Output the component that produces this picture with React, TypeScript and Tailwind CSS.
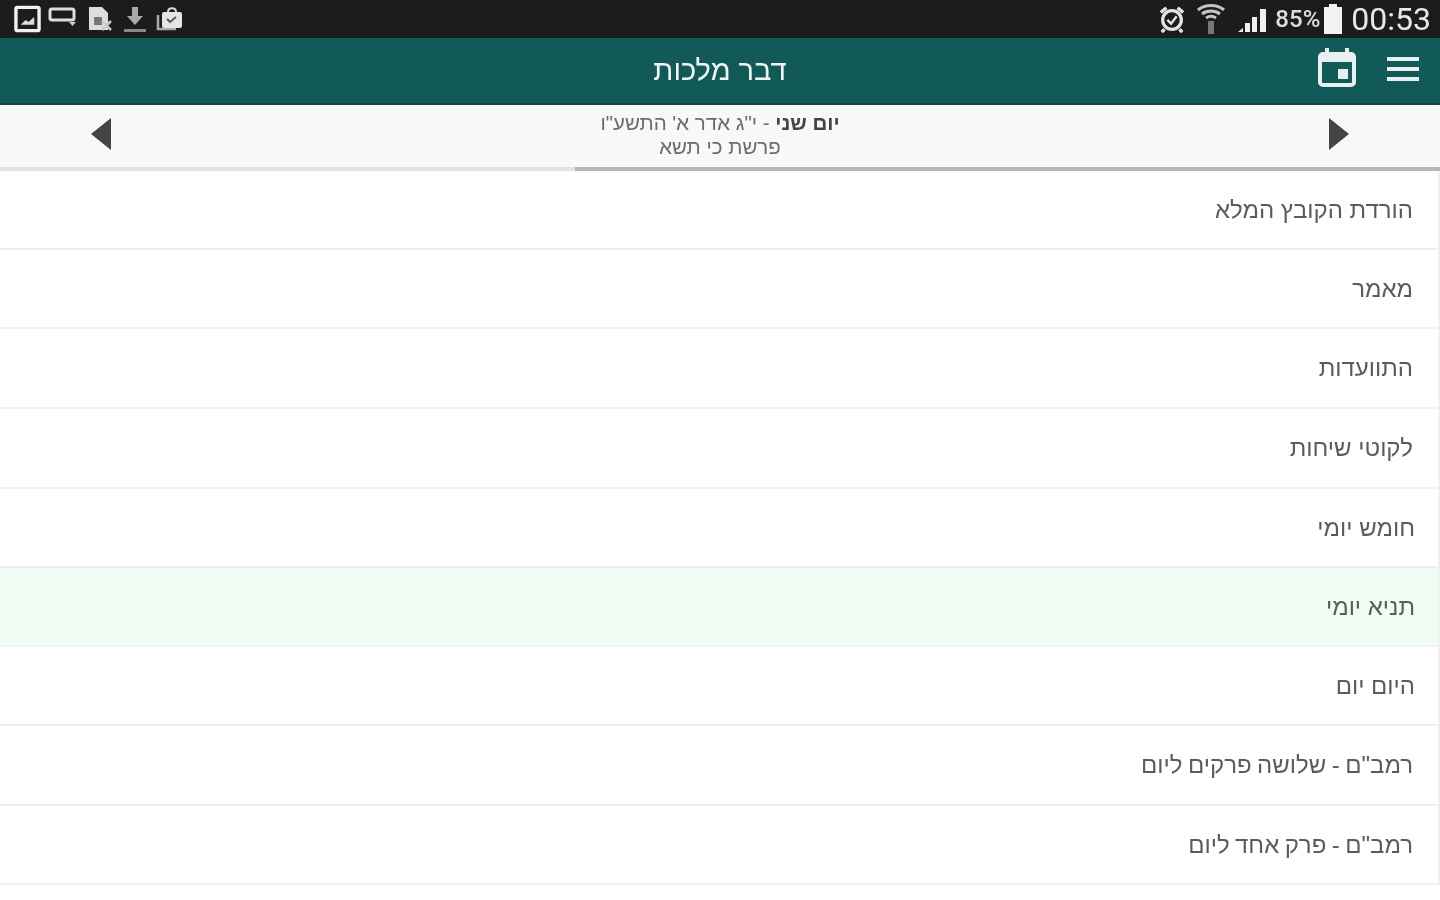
const rows = [
  { label: "הורדת הקובץ המלא", h: "h-[79px]", pr: "pr-[25px]" },
  { label: "מאמר", h: "h-[79px]", pr: "pr-[25px]" },
  { label: "התוועדות", h: "h-[80px]", pr: "pr-[25px]" },
  { label: "לקוטי שיחות", h: "h-[80px]", pr: "pr-[25px]" },
  { label: "חומש יומי", h: "h-[79px]", pr: "pr-[23px]" },
  { label: "תניא יומי", h: "h-[79px]", pr: "pr-[23px]", active: true },
  { label: "היום יום", h: "h-[79px]", pr: "pr-[23px]" },
  { label: 'רמב"ם - שלושה פרקים ליום', h: "h-[80px]", pr: "pr-[25px]", tight: true },
  { label: 'רמב"ם - פרק אחד ליום', h: "h-[79px]", pr: "pr-[25px]", tight: true },
];

const StatusLeft = () => (
  <div className="flex items-center gap-[7px] pl-[14px] blur-[0.7px]">
    <svg width="27" height="28" viewBox="0 0 28 28" fill="none">
      <rect x="2" y="2" width="24" height="24" rx="1.5" stroke="#f2f2f2" strokeWidth="3.5" />
      <path d="M7 20l5-5 3 2 6-5v8z" fill="#ddd" />
    </svg>
    <svg width="30" height="24" viewBox="0 0 30 24" fill="none" className="-mt-[4px]">
      <rect x="2" y="4" width="24" height="11" rx="2" stroke="#ddd" strokeWidth="3" />
      <path d="M21 17h7l-3.5 4z" fill="#ccc" />
    </svg>
    <svg width="28" height="30" viewBox="0 0 28 30" className="ml-[2px]">
      <path d="M2 3h13l6 6v17H2z" fill="#ddd" />
      <rect x="7" y="13" width="8" height="8" fill="#777" />
      <path d="M15 17l9 9M24 17l-9 9" stroke="#ccc" strokeWidth="2.5" />
    </svg>
    <svg width="26" height="30" viewBox="0 0 26 30">
      <path d="M10 3h6v9h5l-8 9-8-9h5z" fill="#aaa" />
      <rect x="2" y="25" width="22" height="3" fill="#888" />
    </svg>
    <svg width="30" height="28" viewBox="0 0 30 28" fill="none">
      <path d="M3 10v14h18" stroke="#aaa" strokeWidth="2.5" />
      <rect x="7" y="7" width="20" height="16" rx="2" fill="#e5e5e5" />
      <path d="M13 7c0-5 8-5 8 0" stroke="#ddd" strokeWidth="2" />
      <path d="M12 14l3 3 6-5" stroke="#555" strokeWidth="2" />
    </svg>
  </div>
);

const StatusRight = () => (
  <div className="flex items-center pr-[9px] blur-[0.7px]">
    <svg width="28" height="30" viewBox="0 0 30 30" fill="none">
      <circle cx="15" cy="16" r="10" stroke="#e5e5e5" strokeWidth="3.5" />
      <path d="M10 16l4 4 6-8" stroke="#e5e5e5" strokeWidth="2.5" />
      <path d="M3 8l6-5M27 8l-6-5M7 26l-3 3M23 26l3 3" stroke="#e5e5e5" strokeWidth="3.5" />
    </svg>
    <svg width="28" height="32" viewBox="0 0 28 32" fill="none" className="ml-[11px]">
      <path d="M1 7c7-6 19-6 26 0M5 11c5-4 13-4 18 0M9 15c3-2 7-2 10 0" stroke="#c4c4c4" strokeWidth="3" />
      <path d="M11 18h6v13h-6z" fill="#777" />
    </svg>
    <svg width="32" height="30" viewBox="0 0 32 30" className="ml-[12px]">
      <path d="M1 28l5-4v4zM8 28v-9h5v9zM15 28V13h5v15zM23 28V5h6v23z" fill="#f0f0f0" />
    </svg>
    <span className="ml-[6px] font-['Roboto',sans-serif] text-[24px] leading-none font-medium text-[#ddd]">85%</span>
    <svg width="20" height="30" viewBox="0 0 20 30" className="ml-[3px]">
      <path d="M6 0h8v3h5v27H1V3h5z" fill="#f2f2f2" />
    </svg>
    <span className="ml-[8px] font-['Roboto',sans-serif] text-[32px] leading-none text-[#e8e8e8]">00:53</span>
  </div>
);

export default function App() {
  return (
    <div className="h-[900px] w-[1440px] overflow-hidden bg-white font-['Liberation_Sans',sans-serif]">
      <div className="flex h-[38px] items-center justify-between bg-[#1c1c1c]">
        <StatusLeft />
        <StatusRight />
      </div>

      <header className="flex h-[67px] items-center border-b-2 border-[#0e4947] bg-[#125a58] pb-[1px]">
        <div className="flex-1 pl-[21px]" />
        <h1 className="text-[29px] font-normal leading-none text-[#f0f5f4] blur-[0.6px]" dir="rtl">דבר מלכות</h1>
        <div className="flex flex-1 items-center justify-end gap-[30px] pr-[21px] blur-[0.5px]">
          <svg width="40" height="40" viewBox="0 0 40 40" fill="none" className="-mt-[4px]">
            <path d="M10 1v7M30 1v7" stroke="#e8f0ef" strokeWidth="4" strokeLinecap="round" />
            <rect x="3" y="6" width="34" height="31" rx="3" stroke="#e8f0ef" strokeWidth="4" />
            <rect x="3" y="6" width="34" height="8" fill="#e8f0ef" />
            <rect x="21" y="21" width="10" height="10" fill="#e8f0ef" />
          </svg>
          <div className="-mt-[2px] flex w-[32px] flex-col gap-[6px]">
            <div className="h-[4px] bg-[#e8f0ef]" />
            <div className="h-[4px] bg-[#e8f0ef]" />
            <div className="h-[4px] bg-[#e8f0ef]" />
          </div>
        </div>
      </header>

      <div className="flex h-[62px] items-center justify-between bg-[#f8f8f8] px-[90px]">
        <svg width="22" height="34" viewBox="0 0 22 34" className="mb-[4px]"><path d="M21 1v32L1 17z" fill="#444" /></svg>
        <div className="mb-[2px] flex flex-col items-center text-[20.5px] leading-[24px] text-[#6c6c6c] blur-[0.6px]" dir="rtl">
          <div><span className="font-bold text-[#444]">יום שני</span> - י"ג אדר א' התשע"ו</div>
          <div>פרשת כי תשא</div>
        </div>
        <svg width="22" height="34" viewBox="0 0 22 34" className="mb-[4px]"><path d="M1 1v32l20-16z" fill="#444" /></svg>
      </div>

      <div className="flex h-[4px] bg-[#e2e2e2]">
        <div className="w-[575px]" />
        <div className="flex-1 bg-[#b8b8b8]" />
      </div>

      <ul dir="rtl">
        {rows.map((row) => (
          <li
            key={row.label}
            className={`flex items-center border-r-2 border-b-2 border-[#f0f0f0] text-[24px] text-[#5c5c5c] ${row.pr} ${row.h} ${row.active ? "bg-[#f1fdf4]" : "bg-white"}`}
          >
            <span className={`blur-[0.6px] ${row.tight ? "[word-spacing:-1.2px]" : ""}`}>{row.label}</span>
          </li>
        ))}
      </ul>
    </div>
  );
}
